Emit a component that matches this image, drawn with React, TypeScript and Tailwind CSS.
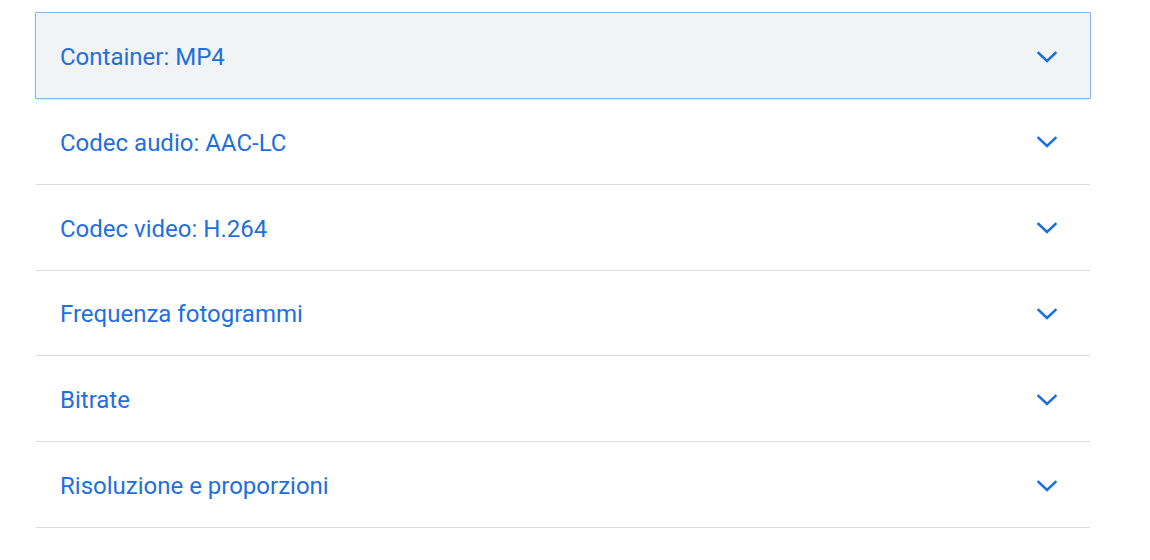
import { useState } from 'react'

const sections = [
  'Container: MP4',
  'Codec audio: AAC-LC',
  'Codec video: H.264',
  'Frequenza fotogrammi',
  'Bitrate',
  'Risoluzione e proporzioni',
]

function Chevron() {
  return (
    <svg width="24" height="14" viewBox="0 0 24 14" fill="none" className="shrink-0 mt-[2px]">
      <polyline
        points="3.5,3 12,11 20.5,3"
        stroke="#1a6fe0"
        strokeWidth="2.5"
        strokeLinecap="square"
        strokeLinejoin="miter"
      />
    </svg>
  )
}

export default function App() {
  const [active, setActive] = useState(0)

  return (
    <div className="w-[1150px] h-[560px] bg-white pt-[12px] pl-[35px] font-['Roboto',sans-serif] overflow-hidden">
      <div className="w-[1056px] flex flex-col">
        {sections.map((label, i) => {
          const isActive = i === active
          return (
            <button
              key={label}
              onClick={() => setActive(i)}
              className={`flex items-center justify-between text-left pl-[24px] pr-[31px] ${
                isActive
                  ? 'h-[87px] bg-[#f1f3f4] border border-[#8ab4f8] rounded-[1px] shadow-[0_1px_2px_rgba(60,64,67,0.15)]'
                  : 'h-[85.8px] ml-[1px] w-[1054px] border-b border-[#dadce0]'
              }`}
            >
              <span className="text-[24px] leading-none text-[#1f6fdf] pt-[3px]">{label}</span>
              <Chevron />
            </button>
          )
        })}
      </div>
    </div>
  )
}
